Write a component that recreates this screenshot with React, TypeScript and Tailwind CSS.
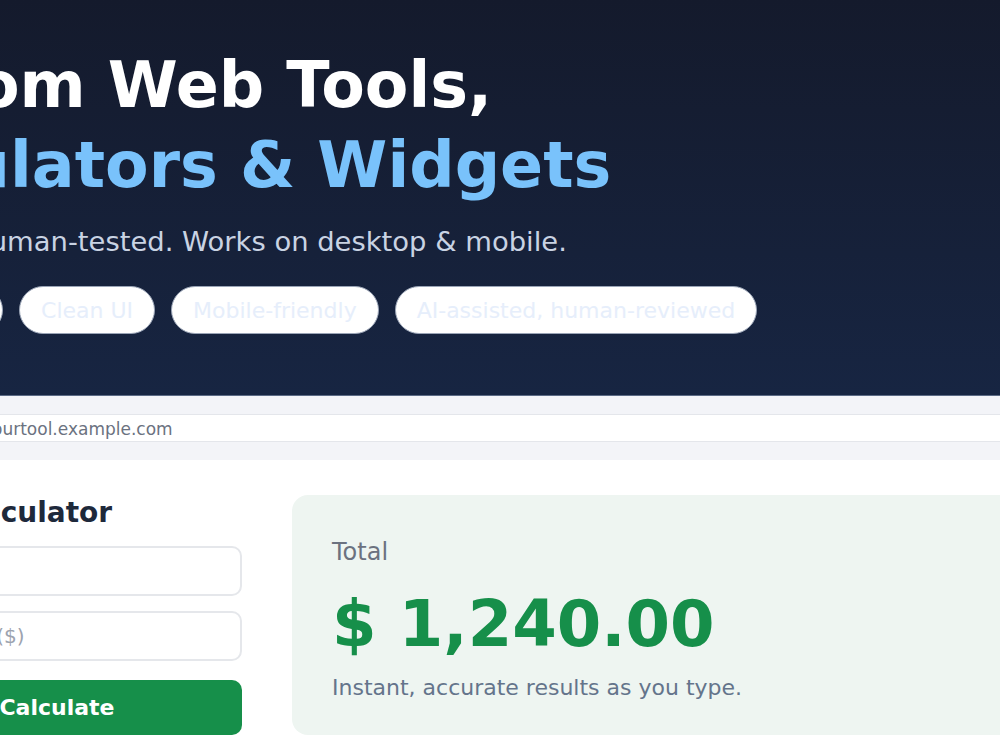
const chips = ["Custom logic", "Clean UI", "Mobile-friendly", "AI-assisted, human-reviewed"];

function Chip({ label }: { label: string }) {
  return (
    <li className="flex h-12 items-center rounded-full border border-[#9aa4b6] bg-white px-[21px] text-[22px] whitespace-nowrap text-[#e6eefb]">
      {label}
    </li>
  );
}

export default function App() {
  return (
    <div className="min-h-screen overflow-hidden bg-white font-['DejaVu_Sans',sans-serif]">
      {/* page is wider than the window and scrolled to the right */}
      <div className="-ml-[240px] w-[1500px]">
        <header className="border-b border-[#5b6a85] bg-gradient-to-b from-[#141a2c] to-[#172542] pt-[45px] pb-[61px] pl-[56px]">
          <h1 className="text-[63.5px] leading-[80px] font-bold whitespace-nowrap text-white">
            Custom Web Tools,
            <br />
            <span className="text-[#79c2fb]">Calculators &amp; Widgets</span>
          </h1>
          <p className="mt-4 ml-[5px] text-[27.4px] leading-[1.5] whitespace-nowrap text-[#c9d3e3]">
            AI-crafted, human-tested. Works on desktop &amp; mobile.
          </p>
          <ul className="mt-6 flex gap-4">
            {chips.map((c) => (
              <Chip key={c} label={c} />
            ))}
          </ul>
        </header>

        <div className="bg-[#f3f4f8] py-[18px] pl-[60px]">
          <div className="flex h-[28px] items-center border-y border-[#e4e6eb] bg-white pt-[4px] pl-[101px] text-[17px] text-[#6b7280]">
            https://yourtool.example.com
          </div>
        </div>

        <main className="flex gap-[50px] pt-[35px] pl-[112px]">
          <section className="w-[370px] shrink-0">
            <h2 className="mb-4 text-[28px] leading-[35px] font-bold text-[#1e293b]">Cost Calculator</h2>
            <div className="flex flex-col">
              <input
                placeholder="Quantity"
                className="h-[50px] rounded-[10px] border-2 border-[#e5e7eb] pr-4 pl-[19px] text-[20px] outline-none placeholder:text-[#9ca3af]"
              />
              <input
                placeholder="Unit price ($)"
                className="mt-[15px] h-[50px] rounded-[10px] border-2 border-[#e5e7eb] pr-4 pl-[19px] text-[20px] outline-none placeholder:text-[#9ca3af]"
              />
              <button className="mt-[19px] h-[55px] rounded-[10px] bg-[#168f4a] text-[22px] font-bold text-white">
                Calculate
              </button>
            </div>
          </section>

          <section className="w-[900px] rounded-2xl bg-[#eef5f1] pt-[39px] pl-10">
            <p className="text-[24px] leading-[1.5] text-[#6b7280]">Total</p>
            <p className="mt-4 text-[64px] leading-[1.2] font-bold text-[#168f4a]">$ 1,240.00</p>
            <p className="mt-2 text-[22px] leading-[1.5] text-[#64748b]">Instant, accurate results as you type.</p>
          </section>
        </main>
      </div>
    </div>
  );
}
